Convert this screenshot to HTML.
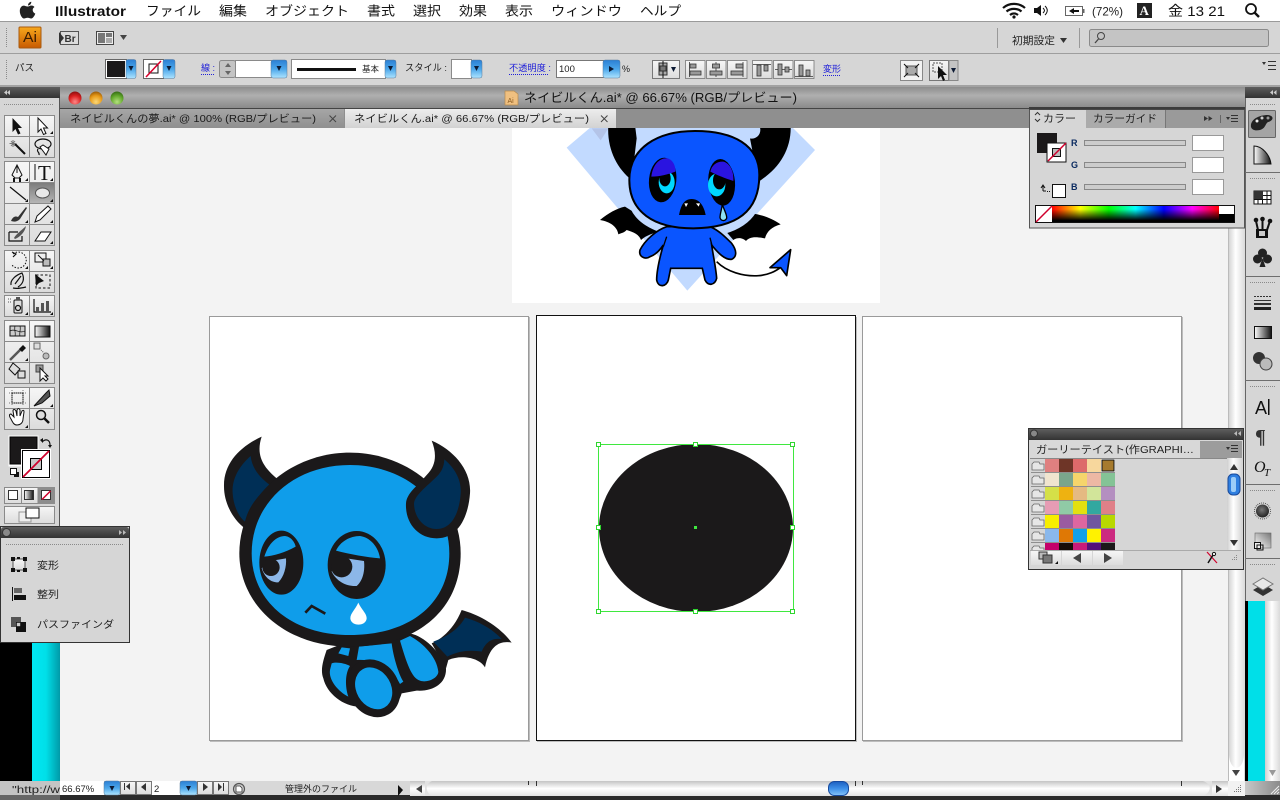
<!DOCTYPE html>
<html lang="ja"><head><meta charset="utf-8"><title>Illustrator</title>
<style>
html,body{margin:0;padding:0;width:1280px;height:800px;overflow:hidden;background:#d6d6d6}
svg{display:block;position:absolute;left:0;top:0}
text{font-family:"Liberation Sans","Noto Sans CJK JP",sans-serif;fill:#222}
.m{font-size:13px;fill:#111}
.s{font-size:9px}
.l{font-size:9px;fill:#2020d8}
.u{stroke:#2020d8;stroke-width:1;stroke-dasharray:1 1;fill:none}
.dd{fill:url(#blue);stroke:#5a7a9a;stroke-width:.5}
.fld{fill:#fff;stroke:#8a8a8a}
.btn{fill:url(#cell);stroke:#777}
.sep{stroke:#8a8a8a;stroke-width:1}
.ic{fill:none;stroke:#111;stroke-width:1.2}
.k{fill:#111}
</style></head><body>
<svg width="1280" height="800" viewBox="0 0 1280 800" xmlns="http://www.w3.org/2000/svg">
<defs>
<linearGradient id="blue" x1="0" y1="0" x2="0" y2="1"><stop offset="0" stop-color="#2b7fd4"/><stop offset=".5" stop-color="#4ba6ea"/><stop offset="1" stop-color="#aee4ff"/></linearGradient>
<linearGradient id="cell" x1="0" y1="0" x2="0" y2="1"><stop offset="0" stop-color="#f6f6f6"/><stop offset="1" stop-color="#dcdcdc"/></linearGradient>
<linearGradient id="ttl" x1="0" y1="0" x2="0" y2="1"><stop offset="0" stop-color="#8d8d8d"/><stop offset=".4" stop-color="#afafaf"/><stop offset="1" stop-color="#8a8a8a"/></linearGradient>
<linearGradient id="tab0" x1="0" y1="0" x2="0" y2="1"><stop offset="0" stop-color="#a6a6a6"/><stop offset="1" stop-color="#8f8f8f"/></linearGradient>
<linearGradient id="tab1" x1="0" y1="0" x2="0" y2="1"><stop offset="0" stop-color="#ededed"/><stop offset="1" stop-color="#d2d2d2"/></linearGradient>
<linearGradient id="hd" x1="0" y1="0" x2="0" y2="1"><stop offset="0" stop-color="#5e5e5e"/><stop offset="1" stop-color="#333"/></linearGradient>
<linearGradient id="ai" x1="0" y1="0" x2="0" y2="1"><stop offset="0" stop-color="#f7a81c"/><stop offset="1" stop-color="#c85a00"/></linearGradient>
<linearGradient id="sel" x1="0" y1="0" x2="0" y2="1"><stop offset="0" stop-color="#7d7d7d"/><stop offset="1" stop-color="#b5b5b5"/></linearGradient>
<linearGradient id="cy" x1="0" y1="0" x2="1" y2="0"><stop offset="0" stop-color="#00e8f4"/><stop offset=".5" stop-color="#00dfe8"/><stop offset="1" stop-color="#009aa8"/></linearGradient>
<linearGradient id="vs" x1="0" y1="0" x2="1" y2="0"><stop offset="0" stop-color="#cfcfcf"/><stop offset=".45" stop-color="#fff"/><stop offset="1" stop-color="#dadada"/></linearGradient>
<linearGradient id="hs" x1="0" y1="0" x2="0" y2="1"><stop offset="0" stop-color="#c4c4c4"/><stop offset=".5" stop-color="#fff"/><stop offset="1" stop-color="#e2e2e2"/></linearGradient>
<linearGradient id="thumb" x1="0" y1="0" x2="0" y2="1"><stop offset="0" stop-color="#1c5fc0"/><stop offset=".5" stop-color="#3d8fe8"/><stop offset="1" stop-color="#86c4f8"/></linearGradient>
<linearGradient id="gr" x1="0" y1="0" x2="1" y2="0"><stop offset="0" stop-color="#fff"/><stop offset="1" stop-color="#111"/></linearGradient>
<linearGradient id="hue" x1="0" y1="0" x2="1" y2="0"><stop offset="0" stop-color="#f00"/><stop offset=".17" stop-color="#ff0"/><stop offset=".34" stop-color="#0f0"/><stop offset=".5" stop-color="#0ff"/><stop offset=".67" stop-color="#00f"/><stop offset=".84" stop-color="#f0f"/><stop offset="1" stop-color="#f00"/></linearGradient>
<linearGradient id="blk" x1="0" y1="0" x2="0" y2="1"><stop offset="0" stop-color="#000" stop-opacity="0"/><stop offset=".2" stop-color="#000" stop-opacity="0"/><stop offset=".9" stop-color="#000"/></linearGradient>
<linearGradient id="grip" x1="0" y1="0" x2="1" y2="0"><stop offset="0" stop-color="#c8c8c8"/><stop offset="1" stop-color="#8a8a8a"/></linearGradient>
<linearGradient id="shadow" x1="0" y1="0" x2="1" y2="1"><stop offset="0" stop-color="#777"/><stop offset="1" stop-color="#fff"/></linearGradient>
<radialGradient id="rb" cx=".5" cy=".8" r=".8"><stop offset="0" stop-color="#f88"/><stop offset=".6" stop-color="#d92020"/><stop offset="1" stop-color="#8a1010"/></radialGradient>
<radialGradient id="yb" cx=".5" cy=".8" r=".8"><stop offset="0" stop-color="#fbd878"/><stop offset=".6" stop-color="#e89a18"/><stop offset="1" stop-color="#9a5a08"/></radialGradient>
<radialGradient id="gb" cx=".5" cy=".8" r=".8"><stop offset="0" stop-color="#b4e080"/><stop offset=".6" stop-color="#62a82c"/><stop offset="1" stop-color="#346a14"/></radialGradient>
<radialGradient id="orb" cx=".45" cy=".4" r=".6"><stop offset="0" stop-color="#777"/><stop offset="1" stop-color="#222"/></radialGradient>
<clipPath id="topclip"><rect x="512" y="128" width="368" height="175"/></clipPath>
<clipPath id="swclip"><rect x="1030" y="458" width="90" height="92"/></clipPath>
<polygon id="tri" points="0,0 5,0 2.5,5" fill="#0c1a33"/>
<polygon id="c" points="3,0 3,3 0,3" fill="#111"/>
<g id="folder"><path d="M1,10 V4 L3,2 H8 L9,4 H13 V10Z" fill="#e6e6e6" stroke="#666" stroke-width=".8"/></g>
<g id="al"><rect width="19.500" height="18" class="btn" x="0.500" y="0.500"/></g>
<pattern id="dots" width="2" height="2" patternUnits="userSpaceOnUse"><rect width="1" height="1" fill="#8a8a8a"/></pattern>
</defs>

<!-- base -->
<rect width="1280" height="800" fill="#d6d6d6"/>
<!-- menu bar -->
<rect width="1280" height="21" fill="#fff"/>
<rect y="21" width="1280" height="1" fill="#9a9a9a"/>
<path fill="#222" d="M28,6.500 C26,6.500 25,5.600 23.800,5.600 C21.500,5.600 19.800,8 19.800,11 C19.800,14.500 22,18.500 24,18.500 C25.200,18.500 26,17.700 27.600,17.700 C29.200,17.700 29.900,18.500 31.200,18.500 C33,18.500 34.800,15.200 35.300,13.600 C33.700,12.900 32.700,11.700 32.700,10 C32.700,8.600 33.400,7.700 34.500,7 C33.500,5.800 32.200,5.500 31.200,5.500 C30,5.500 29,6.500 28,6.500Z M28,5.500 C28,3.500 29.500,2 31.300,1.800 C31.400,3.800 30,5.500 28,5.500Z"/>
<text x="55" y="16" font-size="14" font-weight="bold" textLength="71" lengthAdjust="spacingAndGlyphs" style="fill:#111">Illustrator</text>
<text class="m" x="146" y="15.500" textLength="55" lengthAdjust="spacingAndGlyphs">ファイル</text>
<text class="m" x="219" y="15.500" textLength="28" lengthAdjust="spacingAndGlyphs">編集</text>
<text class="m" x="265" y="15.500" textLength="84" lengthAdjust="spacingAndGlyphs">オブジェクト</text>
<text class="m" x="367" y="15.500" textLength="28" lengthAdjust="spacingAndGlyphs">書式</text>
<text class="m" x="413" y="15.500" textLength="28" lengthAdjust="spacingAndGlyphs">選択</text>
<text class="m" x="459" y="15.500" textLength="28" lengthAdjust="spacingAndGlyphs">効果</text>
<text class="m" x="505" y="15.500" textLength="28" lengthAdjust="spacingAndGlyphs">表示</text>
<text class="m" x="551" y="15.500" textLength="71" lengthAdjust="spacingAndGlyphs">ウィンドウ</text>
<text class="m" x="640" y="15.500" textLength="41" lengthAdjust="spacingAndGlyphs">ヘルプ</text>
<!-- status icons -->
<g fill="none" stroke="#111" stroke-width="2.200">
<path d="M1003,8 C1009,2.500 1019,2.500 1025,8"/><path d="M1006.500,11.500 C1010.500,8 1017.500,8 1021.500,11.500"/><path d="M1010,15 C1012.500,13 1015.500,13 1018,15"/>
</g>
<circle cx="1014" cy="17" r="1.600" fill="#111"/>
<path d="M1034,8 H1037 L1041,5 V16 L1037,13 H1034Z" fill="#111"/>
<path d="M1043,8 C1045,10 1045,11 1043,13 M1045,6 C1048,9 1048,12 1045,15" fill="none" stroke="#111" stroke-width="1"/>
<rect x="1065.500" y="6.500" width="17" height="9" fill="#fff" stroke="#666"/><rect x="1083" y="9" width="1.500" height="4" fill="#666"/>
<path d="M1069,11 L1074,8 V10 H1079 V12 H1074 V14Z" fill="#111"/>
<text x="1092" y="15.500" font-size="12" textLength="31" lengthAdjust="spacingAndGlyphs">(72%)</text>
<rect x="1137" y="3" width="15" height="15" fill="#222"/>
<text x="1139.500" y="15" font-size="13" font-weight="bold" style="font-family:'Liberation Serif',serif;fill:#fff">A</text>
<text x="1168" y="16" font-size="14" textLength="57" lengthAdjust="spacingAndGlyphs" style="fill:#111">金 13 21</text>
<circle cx="1251" cy="9" r="5" fill="none" stroke="#111" stroke-width="1.800"/><path d="M1254.500,12.500 L1259,17" stroke="#111" stroke-width="2.400"/>

<!-- app bar 1 -->
<rect y="22" width="1280" height="31" fill="#d6d6d6"/>
<rect y="53" width="1280" height="1" fill="#9e9e9e"/>
<rect x="5" y="28" width="3" height="20" fill="url(#dots)"/>
<rect x="19" y="27" width="22" height="21" rx="1" fill="url(#ai)" stroke="#a85a10"/>
<text x="23" y="42" font-size="15" style="fill:#3a1c00" textLength="14" lengthAdjust="spacingAndGlyphs">Ai</text>
<rect x="60.500" y="31.500" width="18" height="13" fill="#dcdcdc" stroke="#555"/>
<polygon points="59,32 64,38 59,44" fill="#333"/>
<text x="64.500" y="42" font-size="10" font-weight="bold" style="fill:#333">Br</text>
<rect x="96.500" y="31.500" width="17" height="13" fill="#eee" stroke="#444"/>
<rect x="98" y="33" width="7" height="10" fill="#777"/><rect x="106" y="33" width="6" height="4" fill="#777"/><rect x="106" y="38" width="6" height="5" fill="#aaa"/>
<polygon points="120,35 127,35 123.500,40" fill="#444"/>
<rect x="997" y="28" width="1" height="20" fill="#999"/><rect x="1079" y="28" width="1" height="20" fill="#999"/>
<text x="1012" y="44" font-size="10.500" textLength="43" lengthAdjust="spacingAndGlyphs">初期設定</text>
<polygon points="1060,38 1067,38 1063.500,43" fill="#333"/>
<rect x="1089.500" y="29.500" width="179" height="17" rx="2" fill="#c4c4c4" stroke="#8a8a8a"/>
<circle cx="1101" cy="36" r="3.500" fill="none" stroke="#444"/><path d="M1098.500,39 L1095,43" stroke="#444" stroke-width="1.300"/>

<!-- app bar 2 -->
<rect y="54" width="1280" height="31" fill="#d6d6d6"/>
<rect y="85" width="1280" height="2" fill="#a2a2a2"/>
<rect x="5" y="60" width="3" height="20" fill="url(#dots)"/>
<text x="15" y="71" font-size="9.500">パス</text>
<rect x="105.500" y="59.500" width="21" height="19" fill="#fff" stroke="#666"/><rect x="107" y="61" width="18" height="16" fill="#1b191a"/>
<rect x="126" y="59.500" width="10" height="19" rx="2" class="dd"/><use href="#tri" x="128.500" y="66"/>
<rect x="143.500" y="59.500" width="20" height="19" fill="#fff" stroke="#666"/><rect x="149" y="64" width="9" height="9" fill="none" stroke="#111"/><path d="M146,77 L161,61" stroke="#d8002c" stroke-width="1.500"/>
<rect x="163" y="59.500" width="12" height="19" rx="2" class="dd"/><use href="#tri" x="166.500" y="66"/>
<text class="l" x="201" y="71">線 :</text><path class="u" d="M201,74.500 H214"/>
<rect x="219.500" y="60.500" width="16" height="17" rx="2" fill="#c4c4c4" stroke="#8a8a8a"/>
<polygon points="225,67 231,67 228,63" fill="#666"/><polygon points="225,71 231,71 228,75" fill="#666"/>
<rect x="235.500" y="60.500" width="36" height="17" fill="#fff" stroke="#8a8a8a"/>
<rect x="271" y="60" width="16" height="18" rx="2" class="dd"/><use href="#tri" x="276.500" y="66"/>
<rect x="291.500" y="59.500" width="94" height="19" fill="#fff" stroke="#8a8a8a"/>
<rect x="297" y="68" width="59" height="3" fill="#111"/>
<text x="362" y="72" font-size="8.500">基本</text>
<rect x="385" y="60" width="11" height="18" rx="2" class="dd"/><use href="#tri" x="388" y="66"/>
<text x="405" y="71" font-size="9.500" textLength="42" lengthAdjust="spacingAndGlyphs">スタイル :</text>
<rect x="451.500" y="59.500" width="20" height="19" fill="#fff" stroke="#8a8a8a"/>
<rect x="471" y="60" width="11" height="18" rx="2" class="dd"/><use href="#tri" x="474" y="66"/>
<text class="l" x="509" y="71" textLength="42" lengthAdjust="spacingAndGlyphs">不透明度 :</text><path class="u" d="M509,74.500 H549"/>
<rect x="556.500" y="60.500" width="47" height="17" fill="#fff" stroke="#777"/>
<text x="559" y="72" font-size="9.500">100</text>
<rect x="603" y="60" width="17" height="18" rx="2" class="dd"/><polygon points="609,66 609,72 614,69" fill="#0c1a33"/>
<text x="622" y="72" font-size="9">%</text>
<!-- align -->
<rect x="652.500" y="60.500" width="27" height="18" class="btn"/><rect x="659" y="63" width="8" height="12" fill="#aaa" stroke="#333"/><path d="M663,61 V78" stroke="#111"/><rect x="660" y="66" width="6" height="5" fill="#777" stroke="#333"/>
<use href="#tri" x="671" y="67"/>
<g fill="#999" stroke="#333" stroke-width=".8">
<use href="#al" x="685" y="60"/><use href="#al" x="706" y="60"/><use href="#al" x="727" y="60"/><use href="#al" x="752" y="60"/><use href="#al" x="773" y="60"/><use href="#al" x="794" y="60"/>
<path d="M689.500,62 V77" fill="none"/><rect x="690" y="64" width="6" height="4"/><rect x="690" y="71" width="11" height="4"/>
<path d="M716,62 V77" fill="none"/><rect x="712.500" y="64" width="7" height="4"/><rect x="710" y="71" width="12" height="4"/>
<path d="M743,62 V77" fill="none"/><rect x="736" y="64" width="7" height="4"/><rect x="731" y="71" width="12" height="4"/>
<path d="M753,64.500 H771" fill="none"/><rect x="757" y="65" width="4" height="11"/><rect x="764" y="65" width="4" height="6"/>
<path d="M775,69.500 H792" fill="none"/><rect x="778" y="64" width="4" height="11"/><rect x="785" y="67" width="4" height="5"/>
<path d="M795,76.500 H813" fill="none"/><rect x="799" y="65" width="4" height="11"/><rect x="806" y="70" width="4" height="6"/>
</g>
<text class="l" x="823" y="72" textLength="18" lengthAdjust="spacingAndGlyphs">変形</text><path class="u" d="M823,75.500 H841"/>
<rect x="900.500" y="60.500" width="22" height="20" fill="#f2f2f2" stroke="#888"/>
<rect x="906" y="66" width="11" height="9" fill="#aaa" stroke="#555"/><path d="M904,64 L908,68 M919,64 L915,68 M904,77 L908,73 M919,77 L915,73" stroke="#111"/>
<rect x="929.500" y="60.500" width="19" height="20" class="btn"/><rect x="949" y="60.500" width="9" height="20" fill="#c4c4c4" stroke="#888"/>
<rect x="933" y="63" width="9" height="9" fill="none" stroke="#555" stroke-dasharray="2 1"/>
<path d="M938,66 V79 L941,76 L943,81 L945,80 L943,75 H947Z" fill="#111"/><use href="#tri" x="951" y="68"/>
<polygon points="1262,62 1266,62 1264,65" fill="#333"/><path d="M1268,61.500 H1276 M1268,65.500 H1276 M1268,69.500 H1276" stroke="#333"/>

<!-- document window -->
<rect x="60" y="87" width="1185" height="21" fill="url(#ttl)"/>
<rect x="60" y="108" width="1185" height="1" fill="#444"/>
<circle cx="75" cy="98" r="6.500" fill="url(#rb)"/>
<circle cx="96" cy="98" r="6.500" fill="url(#yb)"/>
<circle cx="117" cy="98" r="6.500" fill="url(#gb)"/>
<path d="M505,91 H514 L518,94 V105 H505Z" fill="#f0c080" stroke="#b58a50" stroke-width=".7"/>
<text x="507.500" y="103" font-size="7" style="fill:#8a5a20">Ai</text>
<text x="524" y="102" font-size="12.500" style="fill:#111" textLength="273" lengthAdjust="spacingAndGlyphs">ネイビルくん.ai* @ 66.67% (RGB/プレビュー)</text>
<rect x="60" y="109" width="1185" height="19" fill="#8f8f8f"/>
<rect x="60" y="109" width="284" height="19" fill="url(#tab0)"/>
<rect x="345" y="109" width="271" height="19" fill="url(#tab1)"/>
<text x="70" y="122" font-size="10.500" style="fill:#1a1a1a" textLength="246" lengthAdjust="spacingAndGlyphs">ネイビルくんの夢.ai* @ 100% (RGB/プレビュー)</text>
<path d="M329.500,115.500 L336,122 M336,115.500 L329.500,122" stroke="#444"/>
<text x="354" y="122" font-size="10.500" style="fill:#1a1a1a" textLength="235" lengthAdjust="spacingAndGlyphs">ネイビルくん.ai* @ 66.67% (RGB/プレビュー)</text>
<path d="M601,115.500 L607.500,122 M607.500,115.500 L601,122" stroke="#444"/>
<!-- canvas -->
<rect x="60" y="128" width="1168" height="653" fill="#f3f3f3"/>
<!-- vertical scrollbar -->
<rect x="1228" y="128" width="17" height="653" fill="url(#vs)"/>
<path d="M1229,755 C1230,772 1243,772 1244,755 V781 H1229Z" fill="#fff"/>
<polygon points="1232,776 1240,776 1236,782" transform="translate(0,-6)" fill="#444"/>
<rect x="1228" y="128" width="1" height="653" fill="#bbb"/>

<!-- top artwork -->
<rect x="512" y="128" width="368" height="175" fill="#fff"/>
<g clip-path="url(#topclip)"><g transform="translate(510,125) scale(.33333)">
<polygon points="170,68 532,497 915,75 840,0 250,0" fill="#c2daff"/>
<polygon points="245,10 295,10 272,46" fill="#b4c4e8"/>
<path d="M295,0 C290,70 320,130 365,165 L380,40 L375,0Z M842,0 C845,70 810,130 745,170 L720,40 L740,0Z" fill="#000"/>
<circle cx="405" cy="15" r="26" fill="#c2daff"/><circle cx="725" cy="15" r="26" fill="#c2daff"/>
<path d="M270,285 C295,265 320,250 345,245 L385,270 L450,320 C430,325 410,330 393,345 C385,325 365,320 350,315 C340,325 330,325 325,328 C322,305 300,290 270,285Z" fill="#000"/>
<path d="M812,298 C785,280 760,270 725,265 L640,310 L670,345 C685,335 700,340 708,348 C720,335 735,335 765,340 C770,320 785,305 812,298Z" fill="#000"/>
<path d="M372,245 C395,298 470,325 555,325 C640,325 715,300 738,235" fill="none" stroke="#c2daff" stroke-width="24"/>
<path d="M470,305 C440,315 405,345 390,375 C385,395 405,405 420,395 C435,390 450,375 460,360 C450,395 440,440 440,465 C445,490 470,485 475,465 L482,430 H577 L585,465 C595,485 615,480 620,460 C618,430 610,395 605,360 C625,385 645,405 665,403 C682,395 680,375 665,355 C645,335 625,315 600,305Z" fill="#0a55ff" stroke="#000" stroke-width="5"/>
<path d="M470,335 L460,365 M600,338 L607,365" stroke="#000" stroke-width="4" fill="none"/>
<path d="M555,18 C670,18 748,60 748,150 C748,260 680,308 550,310 C430,310 358,260 358,165 C358,70 440,18 555,18Z" fill="#0a55ff" stroke="#000" stroke-width="6"/>
<ellipse cx="458" cy="165" rx="41" ry="67" fill="#000" transform="rotate(6 458 165)"/>
<ellipse cx="635" cy="172" rx="40" ry="70" fill="#000" transform="rotate(-5 635 172)"/>
<ellipse cx="470" cy="172" rx="24" ry="33" fill="#00d8ff"/><ellipse cx="465" cy="160" rx="17" ry="24" fill="#000"/>
<ellipse cx="620" cy="180" rx="26" ry="34" fill="#00d8ff"/><ellipse cx="628" cy="166" rx="19" ry="27" fill="#000"/>
<path d="M424,155 C428,118 450,98 472,100 C490,104 497,125 496,140 C475,148 450,155 424,155Z" fill="#2a14e0"/>
<path d="M601,140 C605,118 625,108 640,110 C660,115 672,140 670,168 C645,160 620,150 601,140Z" fill="#2a14e0"/>
<path d="M507,270 C512,245 520,222 545,222 C570,222 582,245 587,270Z" fill="#000"/>
<polygon points="523,235 534,235 528,246" fill="#fff"/><polygon points="558,235 570,235 566,245" fill="#fff"/>
<path d="M637,238 C642,255 652,270 650,280 C645,290 632,288 630,278 C630,265 635,255 637,238Z" fill="#8ee2f2" stroke="#000" stroke-width="4"/>
<path d="M620,410 C650,440 700,455 745,452 C775,450 795,440 815,425" fill="none" stroke="#000" stroke-width="5"/>
<path d="M842,374 L830,452 L812,428 L780,428Z" fill="#0a55ff" stroke="#000" stroke-width="5" stroke-linejoin="round"/>
</g></g>

<!-- artboards -->
<rect x="210" y="317" width="320" height="425" fill="#bcbcbc"/>
<rect x="209.500" y="316.500" width="319" height="424" fill="#fff" stroke="#9a9a9a"/>
<rect x="537" y="317" width="320" height="425" fill="#bcbcbc"/>
<rect x="536.500" y="315.500" width="319" height="425" fill="#fff" stroke="#111"/>
<rect x="863" y="317" width="320" height="425" fill="#bcbcbc"/>
<rect x="862.500" y="316.500" width="319" height="424" fill="#fff" stroke="#9a9a9a"/>

<!-- devil 1 -->
<g transform="translate(210,430) scale(.33333)">
<path fill="#1b191a" d="M155,20 C90,50 40,100 42,170 C42,220 70,270 105,295 L200,145 C165,115 135,80 155,20Z"/>
<path fill="#002f56" d="M122,78 C85,110 65,150 68,190 C70,225 85,260 105,275 C115,230 145,195 180,165 C145,140 125,110 122,78Z"/>
<path fill="#1b191a" d="M755,540 C810,555 870,590 905,638 C875,632 840,640 825,712 C805,680 750,675 715,690 L708,715 L665,640 C700,625 735,590 755,540Z"/>
<path fill="#002f56" d="M765,563 C810,575 850,600 875,627 C850,625 830,630 815,665 C785,660 750,660 712,680 L670,635 C710,620 745,600 765,563Z"/>
<path fill="#1b191a" d="M350,660 C340,690 330,720 340,745 C350,790 400,830 450,830 C480,860 550,870 575,790 L620,782 C670,785 710,760 708,715 C700,680 650,620 600,610 L400,640Z"/>
<path fill="#0f9dea" d="M395,652 L420,655 L415,678 L385,670Z"/>
<path fill="#0f9dea" d="M365,700 C380,695 405,700 420,708 C405,730 405,770 415,800 C385,785 355,750 360,720Z"/>
<path fill="#0f9dea" d="M447,650 L545,640 C550,680 565,730 580,755 L570,762 C550,720 500,685 440,690Z"/>
<path fill="#0f9dea" d="M570,632 L600,618 C640,640 680,680 685,725 C685,745 650,760 630,752 C605,745 590,700 570,632Z"/>
<ellipse cx="491" cy="775" rx="76" ry="90" fill="#1b191a" transform="rotate(-30 491 775)"/>
<ellipse cx="491" cy="775" rx="52" ry="66" fill="#0f9dea" transform="rotate(-30 491 775)"/>
<path fill="#1b191a" d="M420,68 C600,68 752,200 752,370 C752,540 620,650 420,650 C220,650 88,520 88,370 C88,200 240,68 420,68Z"/>
<path fill="#0f9dea" d="M420,105 C590,105 718,220 718,370 C718,520 600,615 420,615 C240,615 125,510 125,370 C125,220 250,105 420,105Z"/>
<path fill="#1b191a" d="M665,32 C730,60 785,120 780,190 C775,260 745,325 680,325 C625,325 585,280 588,220 C590,190 620,170 650,135 C680,105 680,70 665,32Z"/>
<path fill="#002f56" d="M703,88 C735,115 755,150 752,190 C748,250 725,297 680,297 C640,297 612,260 612,220 C615,195 650,170 680,140 C695,125 702,110 703,88Z"/>
<ellipse cx="214" cy="398" rx="66" ry="96" fill="#1b191a"/>
<path fill="#8cb7e8" d="M155,415 C165,445 185,458 205,457 C222,440 230,410 228,385 L170,395Z"/>
<circle cx="183" cy="412" r="26" fill="#1b191a"/>
<path fill="#0f9dea" d="M163,380 C175,340 200,318 225,318 C245,320 255,340 257,350 C225,368 190,378 163,380Z"/>
<ellipse cx="440" cy="405" rx="87" ry="102" fill="#1b191a"/>
<path fill="#8cb7e8" d="M365,425 C380,455 410,470 440,468 C460,450 465,420 462,393 L390,382Z"/>
<circle cx="395" cy="410" r="32" fill="#1b191a"/>
<path fill="#0f9dea" d="M378,362 C390,335 420,318 450,318 C480,322 505,350 510,385 C470,382 420,373 378,362Z"/>
<path d="M286,548 L305,528 L346,551" fill="none" stroke="#1b191a" stroke-width="8"/>
<path fill="#fff" d="M445,518 C435,540 421,550 421,565 C423,590 468,590 470,565 C470,550 455,540 445,518Z"/>
</g>

<!-- selected ellipse -->
<ellipse cx="696" cy="528" rx="97" ry="84" fill="#1b191a"/>
<rect x="598.500" y="444.500" width="195" height="167" fill="none" stroke="#3fe83f"/>
<g fill="#fff" stroke="#2fd62f" stroke-width="1">
<rect x="596.500" y="442.500" width="4" height="4"/><rect x="693.500" y="442.500" width="4" height="4"/><rect x="790.500" y="442.500" width="4" height="4"/>
<rect x="596.500" y="525.500" width="4" height="4"/><rect x="790.500" y="525.500" width="4" height="4"/>
<rect x="596.500" y="609.500" width="4" height="4"/><rect x="693.500" y="609.500" width="4" height="4"/><rect x="790.500" y="609.500" width="4" height="4"/>
</g>
<rect x="694" y="526" width="3" height="3" fill="#3fe83f"/>

<!-- left dock -->
<rect x="0" y="87" width="60" height="555" fill="#d6d6d6"/>
<rect x="0" y="642" width="32" height="139" fill="#000"/>
<rect x="32" y="642" width="28" height="139" fill="url(#cy)"/>
<rect x="0" y="87" width="60" height="11" fill="url(#hd)"/>
<polygon points="7,90 4,92.500 7,95" fill="#ccc"/><polygon points="10,90 7,92.500 10,95" fill="#ccc"/>
<rect x="59" y="98" width="1" height="430" fill="#555"/>
<rect x="4" y="103" width="50" height="2" fill="url(#dots)"/>
<g fill="url(#cell)" stroke="#8a8a8a">
<rect x="4.500" y="115.500" width="50" height="42"/><rect x="4.500" y="161.500" width="50" height="84"/><rect x="4.500" y="250.500" width="50" height="42"/><rect x="4.500" y="295.500" width="50" height="21"/><rect x="4.500" y="320.500" width="50" height="63"/><rect x="4.500" y="387.500" width="50" height="42"/>
</g>
<rect x="30" y="183" width="24" height="20" fill="url(#sel)"/>
<path class="sep" d="M29.500,115 V157 M29.500,161 V245 M29.500,250 V292 M29.500,295 V316 M29.500,320 V383 M29.500,387 V429 M5,136.500 H54 M5,182.500 H54 M5,203.500 H54 M5,224.500 H54 M5,271.500 H54 M5,341.500 H54 M5,362.500 H54 M5,408.500 H54"/>
<!-- tool corners -->
<g>
<use href="#c" x="50" y="131"/><use href="#c" x="25" y="178"/><use href="#c" x="50" y="178"/><use href="#c" x="25" y="199"/><use href="#c" x="50" y="199"/><use href="#c" x="25" y="220"/><use href="#c" x="50" y="220"/><use href="#c" x="50" y="241"/><use href="#c" x="25" y="266"/><use href="#c" x="50" y="266"/><use href="#c" x="25" y="312"/><use href="#c" x="50" y="312"/><use href="#c" x="25" y="358"/><use href="#c" x="50" y="404"/><use href="#c" x="25" y="425"/>
</g>
<!-- tool icons -->
<path class="k" d="M12.500,118 V132 L15.500,129 L18,134.500 L20.500,133.500 L18,128 H22Z"/>
<path d="M38,118 V132 L41,129 L43.500,134.500 L46,133.500 L43.500,128 H47.500Z" fill="#fff" stroke="#111"/>
<path d="M15,144 L25,154" stroke="#111" stroke-width="2"/><path d="M13,140 V147 M9.500,143.500 H16.500 M11,141 L15,146 M15,141 L11,146" stroke="#777"/>
<ellipse cx="43" cy="144" rx="8" ry="5" class="ic"/><path d="M40,147 L46,155 L49,149 L43,145Z" fill="#fff" stroke="#111"/><path d="M38,149 C36,152 40,152 39,155" class="ic"/>
<path d="M17,165 L22,175 L19,178 H15 L12,175Z" fill="#f4f4f4" stroke="#111"/><path d="M17,165 V173" stroke="#111"/><path d="M14,178 V182 M20,178 V182" stroke="#111" stroke-width="2"/>
<path d="M35,164 V180" stroke="#111"/>
<text x="38" y="180" font-size="21" style="font-family:'Liberation Serif',serif;fill:#111">T</text>
<path d="M10,187 L26,200" stroke="#111" stroke-width="1.200"/>
<ellipse cx="42.500" cy="193" rx="7" ry="5" fill="#e8e8e8" stroke="#555"/>
<path d="M11,221 C13,216 16,216 18,217 L26,207 L27,208 L20,219 C17,222 14,222 11,221Z" fill="#333"/>
<path d="M35,222 L37,216 L48,206 L51,209 L40,220Z" fill="#fff" stroke="#111"/>
<path d="M9,232 H18 M9,232 V241 H22 V236" class="ic"/><path d="M14,238 C16,234 22,230 26,226 C25,232 20,237 15,239Z" fill="#555"/>
<path d="M35,241 L41,232 H51 L45,241Z M36,241 H45" fill="#fff" stroke="#111"/>
<path d="M13,254 A8,8 0 1 1 12,265" fill="none" stroke="#111" stroke-dasharray="1.500 1.500"/><path d="M12,252 L16,254 L13,257" class="ic"/>
<rect x="35" y="253" width="11" height="9" fill="#eee" stroke="#111"/><rect x="43" y="259" width="7" height="7" fill="#bbb" stroke="#111"/><path d="M38,255 L44,261" stroke="#111"/>
<path d="M11,285 C10,280 16,275 22,273 C25,279 23,284 18,287 M13,288 C17,289 22,288 26,287 M15,284 L21,276" class="ic"/>
<rect x="36" y="275" width="14" height="13" fill="none" stroke="#111" stroke-dasharray="2.500 2"/><path class="k" d="M35,274 L44,281 L39,283 L36,286Z"/>
<rect x="14" y="300" width="8" height="13" rx="1" fill="#ddd" stroke="#111"/><circle cx="18" cy="308" r="2.500" class="ic"/><rect x="16" y="297" width="4" height="3" fill="#555"/><path d="M8,299 H11 M8,302 H11" stroke="#555" stroke-dasharray="1 1"/>
<path d="M34,299 V312 H51" class="ic"/><rect x="36" y="307" width="3" height="5" fill="#555"/><rect x="41" y="303" width="3" height="9" fill="#555"/><rect x="46" y="301" width="3" height="11" fill="#555"/>
<rect x="10" y="326" width="15" height="10" fill="#ccc" stroke="#111"/><path d="M10,331 C14,328 20,334 25,331 M15,326 C14,330 16,333 15,336 M20,326 C21,330 19,333 20,336" fill="none" stroke="#111" stroke-width=".7"/>
<rect x="35" y="326" width="15" height="11" fill="url(#gr)" stroke="#111"/>
<path d="M10,360 L21,349" stroke="#555" stroke-width="2.500"/><path d="M19,349 L23,345 L26,348 L22,352Z" class="k"/>
<rect x="34" y="343" width="6" height="6" fill="#ddd" stroke="#666"/><circle cx="46" cy="356" r="3" fill="#bbb" stroke="#666"/><path d="M41,350 L44,353" stroke="#666" stroke-dasharray="1 1"/>
<path d="M9,369 L13,363 L20,369 L15,375Z" fill="#ddd" stroke="#111"/><rect x="18" y="371" width="7" height="7" fill="#ddd" stroke="#111"/>
<rect x="36" y="365" width="7" height="7" fill="#999" stroke="#444"/><path d="M40,368 V381 L43,378 L46,381 L48,379 L45,376 H48Z" fill="#fff" stroke="#111"/>
<rect x="12" y="393" width="11" height="10" fill="none" stroke="#111"/><path d="M9,393 H26 M9,403 H26 M12,390 V406 M23,390 V406" stroke="#777" stroke-dasharray="1 1"/>
<path d="M34,406 L46,393 L49,390 L50,396 L42,403Z" fill="#555" stroke="#111"/>
<path d="M11,419 C9,416 9,414 11,414 L14,417 L13,411 C13,409 15,409 16,411 L17,416 L17,410 C18,408 19,408 20,410 L20,416 L22,411 C23,410 24,410 24,412 L23,419 C23,423 20,425 17,425 C14,425 13,423 11,419Z" fill="#fff" stroke="#111"/>
<circle cx="41" cy="415" r="4.500" fill="#ddd" stroke="#111" stroke-width="1.500"/><path d="M44.500,418.500 L49,423" stroke="#111" stroke-width="2.500"/>
<!-- fill/stroke -->
<rect x="8.500" y="435.500" width="30" height="31" fill="#fff"/><rect x="10" y="437" width="27" height="27" fill="#1b191a" stroke="#000"/>
<rect x="21" y="449" width="30" height="30" fill="#fff"/><rect x="22.500" y="450.500" width="27" height="27" fill="#fff" stroke="#000"/>
<rect x="30.500" y="458.500" width="11" height="11" fill="#c8c8c8" stroke="#000"/><path d="M23,477 L49,451" stroke="#d0002c" stroke-width="1.800"/>
<path d="M42,442 C46,438 50,440 50,445" class="ic"/><path d="M40,440 L43,438 L43,443Z M48,445 L52,445 L50,448Z" class="k"/>
<rect x="14" y="472" width="5" height="5" fill="#111"/><rect x="10.500" y="468.500" width="6" height="6" fill="#fff" stroke="#111"/>
<rect x="4.500" y="487.500" width="50" height="16" fill="url(#cell)" stroke="#8a8a8a"/>
<rect x="38" y="487" width="17" height="17" fill="#8d8d8d"/><path class="sep" d="M21.500,487 V503 M38,487 V503"/>
<rect x="8.500" y="490.500" width="9" height="9" fill="#fff" stroke="#333"/>
<rect x="24.500" y="490.500" width="9" height="9" fill="url(#gr)" stroke="#333"/>
<rect x="41.500" y="490.500" width="9" height="9" fill="#fff" stroke="#333"/><path d="M42,499.500 L50.500,491" stroke="#d0002c" stroke-width="1.500"/>
<rect x="4.500" y="506.500" width="50" height="17" fill="url(#cell)" stroke="#8a8a8a"/>
<rect x="19" y="512" width="12" height="10" fill="#eee" stroke="#999"/><rect x="26" y="508" width="13" height="10" fill="#fff" stroke="#111"/>

<!-- floating left panel -->
<rect x="0.500" y="526.500" width="129" height="116" fill="#d6d6d6" stroke="#333"/>
<path d="M1,538 V530 Q1,527 4,527 H126 Q129,527 129,530 V538Z" fill="url(#hd)"/>
<circle cx="6.500" cy="532.500" r="4" fill="#888" stroke="#333"/>
<polygon points="119,530 119,535 122,532.500" fill="#bbb"/><polygon points="123,530 123,535 126,532.500" fill="#bbb"/>
<rect x="5" y="544" width="119" height="2" fill="url(#dots)"/>
<rect x="13" y="559" width="12" height="11" fill="url(#cell)" stroke="#555"/>
<g fill="#111"><rect x="11" y="557" width="4" height="4"/><rect x="23" y="557" width="4" height="4"/><rect x="11" y="568" width="4" height="4"/><rect x="23" y="568" width="4" height="4"/><rect x="17" y="557" width="3" height="2"/><rect x="17" y="570" width="3" height="2"/></g>
<text x="37" y="569" font-size="10" textLength="22" lengthAdjust="spacingAndGlyphs">変形</text>
<path d="M12.500,587 V601" stroke="#111"/><rect x="14" y="588" width="8" height="5" fill="#666"/><rect x="14" y="595" width="12" height="5" fill="#111"/>
<text x="37" y="598" font-size="10" textLength="22" lengthAdjust="spacingAndGlyphs">整列</text>
<rect x="11" y="617" width="10" height="10" fill="#555"/><rect x="16" y="622" width="10" height="10" fill="#111"/><rect x="16.500" y="622.500" width="4" height="4" fill="#ccc" stroke="#111" stroke-width=".6"/>
<text x="37" y="628" font-size="10" textLength="77" lengthAdjust="spacingAndGlyphs">パスファインダ</text>

<!-- right dock -->
<rect x="1245" y="87" width="35" height="514" fill="#d6d6d6"/>
<rect x="1245" y="87" width="35" height="11" fill="url(#hd)"/>
<polygon points="1273,90 1270,92.500 1273,95" fill="#ccc"/><polygon points="1276.500,90 1273.500,92.500 1276.500,95" fill="#ccc"/>
<rect x="1245" y="98" width="1" height="503" fill="#666"/>
<path d="M1245,172.500 H1280 M1245,276.500 H1280 M1245,380.500 H1280 M1245,484.500 H1280 M1245,558.500 H1280" stroke="#6e6e6e"/>
<g fill="url(#dots)"><rect x="1250" y="103" width="26" height="2"/><rect x="1250" y="177" width="26" height="2"/><rect x="1250" y="281" width="26" height="2"/><rect x="1250" y="385" width="26" height="2"/><rect x="1250" y="489" width="26" height="2"/><rect x="1250" y="563" width="26" height="2"/></g>
<rect x="1248.500" y="110.500" width="27" height="27" rx="1" fill="#a4a4a4" stroke="#666"/>
<path d="M1251,127 C1250,120 1258,115 1268,115 C1275,116 1273,121 1268,122 C1265,124 1266,128 1260,130 C1255,131 1252,130 1251,127Z" fill="#222"/>
<circle cx="1257" cy="121" r="1.500" fill="#eee"/><circle cx="1262" cy="118" r="1.500" fill="#ccc"/><circle cx="1268" cy="118" r="1.500" fill="#999"/>
<path d="M1254,146 C1262,146 1270,155 1271,164 H1254Z" fill="url(#gr)" stroke="#111"/>
<g transform="translate(1254,191)"><rect width="17" height="13" fill="#fff" stroke="#111"/><path d="M0,4.500 H17 M0,8.500 H17 M4,0 V13 M8.500,0 V13 M13,0 V13" stroke="#111" stroke-width="1"/><rect width="9" height="8" fill="#333"/></g>
<rect x="1256" y="229" width="12" height="9" fill="#111"/><rect x="1259" y="231" width="6" height="5" fill="#ccc"/><path d="M1258,230 L1256,221 M1262.500,230 V219 M1267,230 L1270,221" stroke="#111" stroke-width="2"/><circle cx="1256" cy="220" r="2.300" fill="#111"/><circle cx="1262.500" cy="219" r="2.300" fill="#111"/><circle cx="1270" cy="221" r="2.300" fill="#111"/>
<circle cx="1262.500" cy="253" r="4.500" fill="#222"/><circle cx="1257.500" cy="259" r="4.500" fill="#222"/><circle cx="1267.500" cy="259" r="4.500" fill="#222"/><path d="M1262.500,258 L1259.500,267 H1265.500Z" fill="#222"/>
<path d="M1254,296.500 H1271" stroke="#333" stroke-dasharray="2 1"/><rect x="1254" y="300" width="17" height="1" fill="#333"/><rect x="1254" y="303" width="17" height="2" fill="#333"/><rect x="1254" y="307" width="17" height="3" fill="#222"/>
<rect x="1254.500" y="326.500" width="17" height="12" fill="url(#gr)" stroke="#111"/>
<circle cx="1259" cy="358" r="6" fill="#333"/><circle cx="1266" cy="364" r="6" fill="#bbb" stroke="#444"/>
<text x="1255" y="414" font-size="18" style="fill:#111">A</text><rect x="1268" y="399" width="1.500" height="16" fill="#111"/>
<text x="1255" y="443" font-size="20" font-weight="bold" style="font-family:'Liberation Serif',serif;fill:#333">¶</text>
<text x="1254" y="472" font-size="16" font-style="italic" style="font-family:'Liberation Serif',serif;fill:#111">O</text><text x="1264" y="476" font-size="11" font-style="italic" style="font-family:'Liberation Serif',serif;fill:#111">T</text>
<circle cx="1262.500" cy="511" r="8" fill="none" stroke="#555" stroke-dasharray="1 1"/><circle cx="1262.500" cy="511" r="6.500" fill="url(#orb)"/>
<rect x="1255" y="533" width="16" height="15" fill="url(#shadow)" stroke="#666" stroke-width=".6" transform="matrix(-1 0 0 1 2526 0)"/><rect x="1254.500" y="542.500" width="6" height="6" fill="#eee" stroke="#111"/><rect x="1257" y="545" width="6" height="5" fill="none" stroke="#111"/>
<path d="M1253,590 L1263,584 L1273,590 L1263,596Z" fill="#333"/><path d="M1253,584 L1263,578 L1273,584 L1263,590Z" fill="#e8e8e8" stroke="#777"/>
<!-- right strip -->
<rect x="1245" y="601" width="3" height="180" fill="#000"/><rect x="1248" y="601" width="18" height="180" fill="#00dfe8"/>
<rect x="1265" y="601" width="15" height="180" fill="url(#vs)"/>
<polygon points="1269,770 1276,770 1272.500,776" fill="#999"/>

<!-- color panel -->
<rect x="1029" y="107" width="216" height="3" fill="#3c3c3c"/>
<rect x="1029.500" y="110" width="215" height="118" fill="#d6d6d6" stroke="#555"/>
<rect x="1030" y="110" width="214" height="18" fill="#9a9a9a"/>
<rect x="1030" y="110" width="56" height="18" fill="#d6d6d6"/>
<rect x="1086" y="110" width="79" height="18" fill="#ababab"/>
<rect x="1165" y="110" width="1" height="18" fill="#777"/>
<path d="M1035,115 L1037.500,112.500 L1040,115 M1035,119 L1037.500,121.500 L1040,119" fill="none" stroke="#333"/>
<text x="1043" y="122" font-size="10.500" textLength="33" lengthAdjust="spacingAndGlyphs">カラー</text>
<text x="1093" y="122" font-size="10.500" textLength="64" lengthAdjust="spacingAndGlyphs">カラーガイド</text>
<polygon points="1204,116 1204,121 1208,118.500" fill="#333"/><polygon points="1208.500,116 1208.500,121 1212.500,118.500" fill="#333"/>
<rect x="1220" y="115" width="1" height="8" fill="#666"/>
<polygon points="1226,117 1230,117 1228,120" fill="#333"/><path d="M1231,115.500 H1238 M1231,118.500 H1238 M1231,121.500 H1238" stroke="#333"/>
<rect x="1037" y="133" width="20" height="20" fill="#1b191a"/>
<rect x="1047" y="143" width="19" height="19" fill="#fff" stroke="#111"/>
<rect x="1052.500" y="148.500" width="8" height="8" fill="#bbb" stroke="#111"/><path d="M1048,161 L1066,143" stroke="#d0002c" stroke-width="1.500"/>
<g font-size="9" font-weight="bold"><text x="1071" y="146" style="fill:#0a2a60">R</text><text x="1071" y="168" style="fill:#0a2a60">G</text><text x="1071" y="190" style="fill:#0a2a60">B</text></g>
<g fill="#ccc" stroke="#888"><rect x="1084.500" y="140.500" width="101" height="5"/><rect x="1084.500" y="162.500" width="101" height="5"/><rect x="1084.500" y="184.500" width="101" height="5"/></g>
<g fill="#fff" stroke="#999"><rect x="1192.500" y="135.500" width="31" height="15"/><rect x="1192.500" y="157.500" width="31" height="15"/><rect x="1192.500" y="179.500" width="31" height="15"/></g>
<path d="M1043,186 V191 M1041,188 L1043,185 L1045,188 M1043,191 H1046" fill="none" stroke="#111"/><path d="M1047,191.500 H1051" stroke="#111" stroke-dasharray="1 1"/>
<rect x="1052.500" y="184.500" width="13" height="13" fill="#fff" stroke="#111"/>
<rect x="1035" y="205" width="200" height="18" fill="#111"/>
<rect x="1036" y="206" width="16" height="16" fill="#fff"/><path d="M1036,222 L1052,206" stroke="#d0002c" stroke-width="1.500"/>
<rect x="1052" y="206" width="167" height="16" fill="url(#hue)"/><rect x="1052" y="206" width="167" height="16" fill="url(#blk)"/>
<rect x="1219" y="206" width="15" height="8" fill="#fff"/><rect x="1219" y="214" width="15" height="8" fill="#000"/>

<!-- swatches panel -->
<rect x="1028.500" y="428.500" width="215" height="141" fill="#d6d6d6" stroke="#333"/>
<rect x="1029" y="429" width="214" height="11" fill="url(#hd)"/>
<circle cx="1034" cy="433.500" r="3.500" fill="#888" stroke="#333"/>
<polygon points="1237,431 1234,433.500 1237,436" fill="#bbb"/><polygon points="1241,431 1238,433.500 1241,436" fill="#bbb"/>
<rect x="1030" y="440" width="212" height="18" fill="#d8d8d8"/>
<rect x="1200" y="441" width="42" height="17" fill="#9c9c9c"/>
<text x="1036" y="453" font-size="10.500" textLength="158" lengthAdjust="spacingAndGlyphs">ガーリーテイスト(作GRAPHI…</text>
<polygon points="1226,447 1230,447 1228,450" fill="#333"/><path d="M1231,445.500 H1238 M1231,448.500 H1238 M1231,451.500 H1238" stroke="#333"/>
<rect x="1030" y="458" width="197" height="92" fill="#d6d6d6"/>
<rect x="1030" y="458" width="197" height="1" fill="#888"/>
<g clip-path="url(#swclip)">
<use href="#folder" x="1031" y="460"/><use href="#folder" x="1031" y="474"/><use href="#folder" x="1031" y="488"/><use href="#folder" x="1031" y="502"/><use href="#folder" x="1031" y="516"/><use href="#folder" x="1031" y="530"/><use href="#folder" x="1031" y="544"/>
<rect x="1045" y="459" width="14" height="13" fill="#e08080"/><rect x="1059" y="459" width="14" height="13" fill="#6e3527"/><rect x="1073" y="459" width="14" height="13" fill="#dd6a6a"/><rect x="1087" y="459" width="14" height="13" fill="#f7d79d"/>
<rect x="1101" y="459" width="14" height="13" fill="#fff"/><rect x="1102" y="460" width="12" height="11" fill="#a67a2d" stroke="#111"/>
<rect x="1045" y="473" width="14" height="13" fill="#f0e4cf"/><rect x="1059" y="473" width="14" height="13" fill="#7aa58c"/><rect x="1073" y="473" width="14" height="13" fill="#f5d56b"/><rect x="1087" y="473" width="14" height="13" fill="#edb8a4"/><rect x="1101" y="473" width="14" height="13" fill="#84c396"/>
<rect x="1045" y="487" width="14" height="13" fill="#d5e048"/><rect x="1059" y="487" width="14" height="13" fill="#eeb211"/><rect x="1073" y="487" width="14" height="13" fill="#e5ba82"/><rect x="1087" y="487" width="14" height="13" fill="#d2e59a"/><rect x="1101" y="487" width="14" height="13" fill="#b48fc0"/>
<rect x="1045" y="501" width="14" height="13" fill="#e69cb4"/><rect x="1059" y="501" width="14" height="13" fill="#90caa6"/><rect x="1073" y="501" width="14" height="13" fill="#e3e010"/><rect x="1087" y="501" width="14" height="13" fill="#32a8a0"/><rect x="1101" y="501" width="14" height="13" fill="#e08088"/>
<rect x="1045" y="515" width="14" height="13" fill="#f7ee00"/><rect x="1059" y="515" width="14" height="13" fill="#9a5ba0"/><rect x="1073" y="515" width="14" height="13" fill="#dd66a0"/><rect x="1087" y="515" width="14" height="13" fill="#7056a0"/><rect x="1101" y="515" width="14" height="13" fill="#b8d800"/>
<rect x="1045" y="529" width="14" height="13" fill="#8ab8ec"/><rect x="1059" y="529" width="14" height="13" fill="#df7805"/><rect x="1073" y="529" width="14" height="13" fill="#0fa0ea"/><rect x="1087" y="529" width="14" height="13" fill="#fff200"/><rect x="1101" y="529" width="14" height="13" fill="#cc2a80"/>
<rect x="1045" y="543" width="14" height="13" fill="#c4006a"/><rect x="1059" y="543" width="14" height="13" fill="#180c08"/><rect x="1073" y="543" width="14" height="13" fill="#c81a7a"/><rect x="1087" y="543" width="14" height="13" fill="#54107a"/><rect x="1101" y="543" width="14" height="13" fill="#1b191a"/>
</g>
<path d="M1031,472.500 H1115 M1031,486.500 H1115 M1031,500.500 H1115 M1031,514.500 H1115 M1031,528.500 H1115 M1031,542.500 H1115" stroke="#777" stroke-width=".8"/>
<rect x="1227" y="458" width="14" height="92" fill="url(#vs)"/>
<polygon points="1230,470 1238,470 1234,464" fill="#333"/>
<rect x="1228" y="474" width="12" height="21" rx="5" fill="#2f7fe0" stroke="#1a4a9a"/><rect x="1231" y="477" width="5" height="15" rx="2" fill="#9ccdf8"/>
<polygon points="1230,540 1238,540 1234,546" fill="#333"/>
<rect x="1030" y="550" width="211" height="15" fill="#d6d6d6"/>
<path d="M1030,550.500 H1241" stroke="#aaa"/>
<g fill="url(#cell)"><rect x="1031" y="551" width="30" height="14"/><rect x="1062" y="551" width="30" height="14"/><rect x="1093" y="551" width="30" height="14"/></g>
<rect x="1039" y="552" width="8" height="7" fill="#bbb" stroke="#333"/><rect x="1043" y="555" width="9" height="8" fill="#777" stroke="#333"/><use href="#c" x="1055" y="561"/>
<polygon points="1073,558 1081,553 1081,563" fill="#444"/><polygon points="1104,553 1104,563 1112,558" fill="#444"/>
<path d="M1207,552 L1217,563" stroke="#d0002c" stroke-width="1.200"/><path d="M1208,563 L1213,555" stroke="#111" stroke-width="1.500"/><circle cx="1214" cy="554" r="1.600" fill="#fff" stroke="#111"/>
<g fill="#888"><rect x="1236" y="555" width="1" height="1"/><rect x="1234" y="557" width="1" height="1"/><rect x="1236" y="557" width="1" height="1"/><rect x="1232" y="559" width="1" height="1"/><rect x="1234" y="559" width="1" height="1"/><rect x="1236" y="559" width="1" height="1"/></g>

<!-- status bar -->
<rect x="0" y="781" width="1245" height="15" fill="#d8d8d8"/>
<rect x="0" y="781" width="60" height="15" fill="#c4c4c4"/>
<rect x="0" y="795" width="1280" height="5" fill="#2a2a2a"/>
<rect x="0" y="795" width="60" height="5" fill="#666"/>
<text x="12" y="793" font-size="10.500" textLength="48" lengthAdjust="spacingAndGlyphs" style="fill:#222">"http://w</text>
<rect x="60" y="781" width="44" height="14" fill="#fff"/>
<text x="62" y="792" font-size="9.500">66.67%</text>
<rect x="104" y="781" width="16" height="14" rx="2" class="dd"/><use href="#tri" x="109.500" y="786"/>
<rect x="120.500" y="781.500" width="15" height="13" class="btn"/><rect x="136.500" y="781.500" width="15" height="13" class="btn"/>
<path d="M124.500,783 V790" stroke="#333"/><polygon points="130,783 130,790 126,786.500" fill="#333"/><polygon points="146,783 146,791 141,787" fill="#333"/>
<rect x="152" y="781" width="28" height="14" fill="#fff"/>
<text x="154" y="792" font-size="9.500">2</text>
<rect x="180" y="781" width="17" height="14" rx="2" class="dd"/><use href="#tri" x="186" y="786"/>
<rect x="197.500" y="781.500" width="15" height="13" class="btn"/><rect x="213.500" y="781.500" width="15" height="13" class="btn"/>
<polygon points="203,783 203,791 208,787" fill="#333"/><polygon points="218,783 218,791 222,787" fill="#333"/><path d="M223.500,783 V791" stroke="#333"/>
<circle cx="239" cy="789" r="5.500" fill="#ccc" stroke="#555" stroke-width="1.200"/><path d="M236,786 H240 L242,788 V792 H236Z" fill="#fff" stroke="#333" stroke-width=".8"/>
<text x="285" y="792" font-size="9" textLength="72" lengthAdjust="spacingAndGlyphs">管理外のファイル</text>
<polygon points="398,785 398,796 403,790" fill="#111"/>
<rect x="410" y="781" width="818" height="15" fill="url(#hs)"/>
<polygon points="422,785 422,793 416,789" fill="#444"/>
<path d="M432,781 C425,784 425,792 432,796 H425 V781Z" fill="#e2e2e2"/>
<path d="M1203,781 C1212,784 1212,792 1203,796 H1212 V781Z" fill="#e2e2e2"/>
<polygon points="1216,785 1216,793 1222,789" fill="#333"/>
<rect x="1228" y="781" width="17" height="15" fill="#f2f2f2"/>
<g fill="#777"><rect x="1240" y="785" width="1" height="1"/><rect x="1238" y="787" width="1" height="1"/><rect x="1240" y="787" width="1" height="1"/><rect x="1236" y="789" width="1" height="1"/><rect x="1238" y="789" width="1" height="1"/><rect x="1240" y="789" width="1" height="1"/><rect x="1234" y="791" width="1" height="1"/><rect x="1236" y="791" width="1" height="1"/><rect x="1238" y="791" width="1" height="1"/><rect x="1240" y="791" width="1" height="1"/></g>
<rect x="828.500" y="781.500" width="20" height="14" rx="6" fill="url(#thumb)" stroke="#174a9e"/>
<path d="M528.500,781 V785 M536.500,781 V786 M855.500,781 V786 M862.500,781 V785 M1181.500,781 V786" stroke="#333"/>
<rect x="1245" y="781" width="35" height="14" fill="url(#grip)"/>
<path d="M1271,794 L1279,786 M1274,794 L1279,789 M1277,794 L1279,792" stroke="#eee"/>
</svg>
</body></html>
